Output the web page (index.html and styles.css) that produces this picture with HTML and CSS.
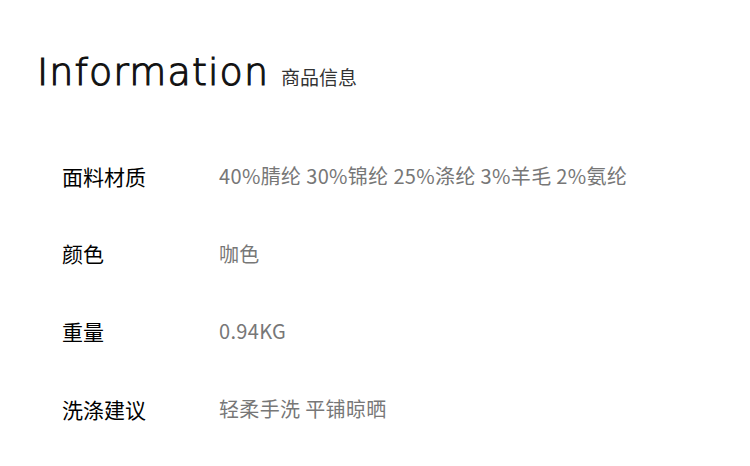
FILE: index.html
```html
<!DOCTYPE html>
<html>
<head>
<meta charset="utf-8">
<link rel="stylesheet" href="styles.css">
</head>
<body>
<div class="page">
  <div class="header">
    <span class="title">Information</span>
    <span class="subtitle">商品信息</span>
  </div>
  <div class="rows">
    <div class="row"><span class="label">面料材质</span><span class="value">40%腈纶 30%锦纶 25%涤纶 3%羊毛 2%氨纶</span></div>
    <div class="row"><span class="label">颜色</span><span class="value">咖色</span></div>
    <div class="row"><span class="label">重量</span><span class="value">0.94KG</span></div>
    <div class="row"><span class="label">洗涤建议</span><span class="value">轻柔手洗 平铺晾晒</span></div>
  </div>
</div>
</body>
</html>
```
FILE: styles.css
```css
html, body {
  margin: 0;
  padding: 0;
  background: #fff;
}
.page {
  width: 750px;
  height: 466px;
  font-family: "Noto Sans CJK SC", "Noto Sans", sans-serif;
}
.header {
  display: flex;
  align-items: baseline;
  padding: 47px 0 0 37px;
  height: 59px;
}
.title {
  font-family: "DejaVu Sans", sans-serif;
  font-weight: 200;
  font-size: 38px;
  letter-spacing: 1.1px;
  -webkit-text-stroke: 1.1px #111;
  color: #111;
  line-height: 50px;
}
.subtitle {
  font-size: 19px;
  color: #333;
  margin-left: 12px;
}
.rows {
  display: flex;
  flex-direction: column;
  padding: 54px 0 0 62px;
  gap: 46.7px;
}
.row {
  display: flex;
  align-items: center;
  height: 31px;
}
.label {
  width: 157px;
  font-size: 21px;
  font-weight: 400;
  color: #000;
}
.value {
  font-size: 20px;
  letter-spacing: 0.35px;
  color: #777;
}
```
